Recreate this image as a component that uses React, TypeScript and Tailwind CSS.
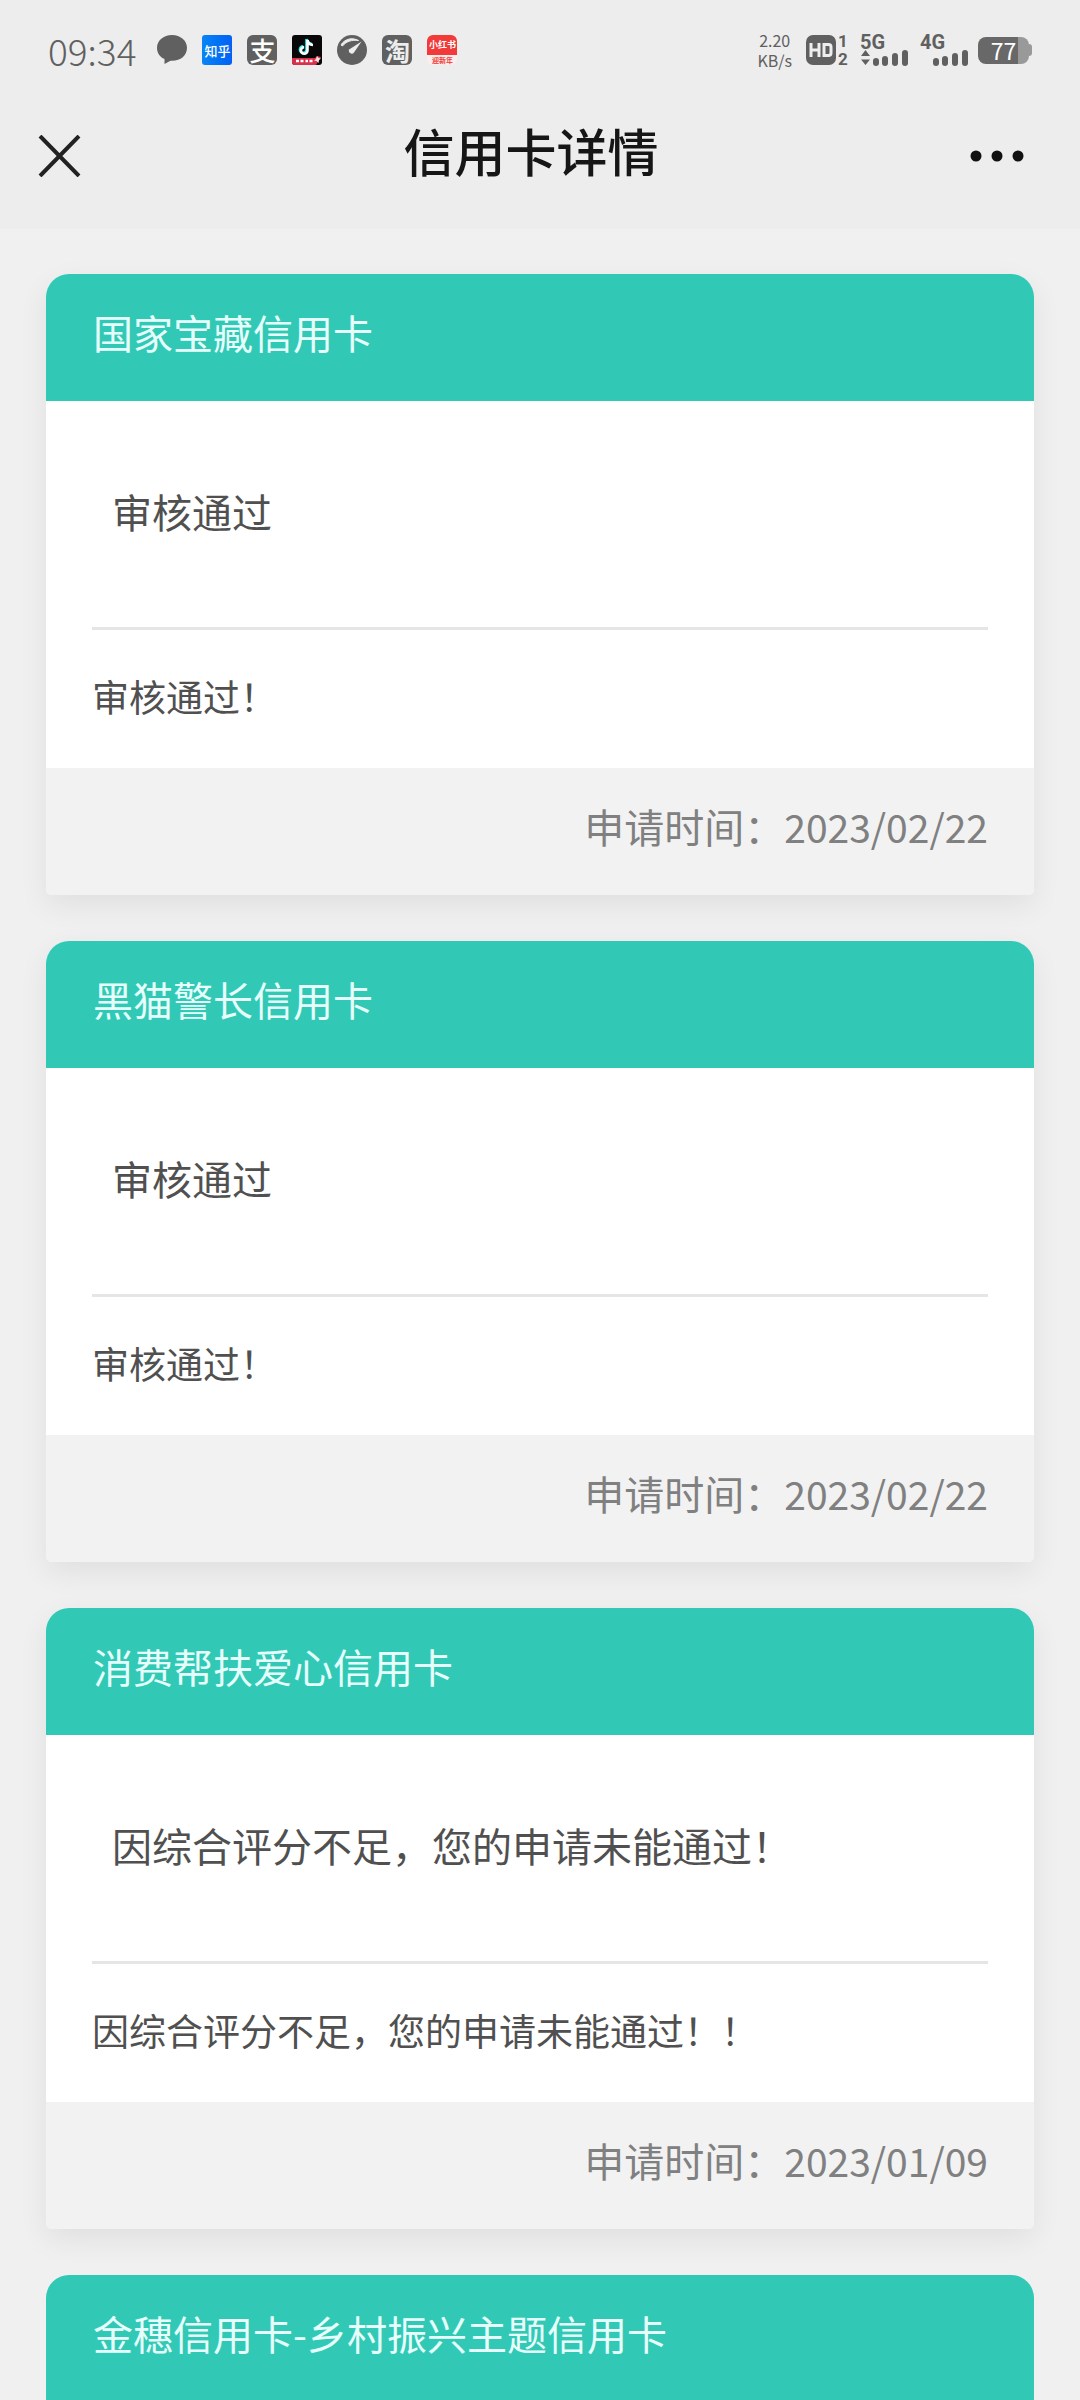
import React from 'react';

interface CardRecord {
    id: number;
    name: string;
    status: string;
    detail: string;
    date: string;
}

const records: CardRecord[] = [
    { id: 1, name: '国家宝藏信用卡', status: '审核通过', detail: '审核通过！', date: '2023/02/22' },
    { id: 2, name: '黑猫警长信用卡', status: '审核通过', detail: '审核通过！', date: '2023/02/22' },
    { id: 3, name: '消费帮扶爱心信用卡', status: '因综合评分不足，您的申请未能通过！', detail: '因综合评分不足，您的申请未能通过！！', date: '2023/01/09' },
];

const lastCardName = '金穗信用卡-乡村振兴主题信用卡';

const SignalBars = () => (
    <>
        <rect x="13" y="23" width="6" height="8" rx="3" />
        <rect x="22" y="21" width="6" height="10" rx="3" />
        <rect x="32" y="18" width="6" height="13" rx="3" />
        <rect x="42" y="15" width="6" height="16" rx="3" />
    </>
);

const StatusBar = () => (
    <div className="flex h-[100px] items-center justify-between px-12 text-[#606060]">
        <div className="flex items-center gap-[15px]">
            <time className="mr-[6px] text-[37px] leading-[40px] font-light">09:34</time>
            <svg className="h-[30px] w-[30px]" viewBox="0 0 30 30" fill="#606060">
                <path d="M15 0C6.500 0 0 5.500 0 12.800c0 5.500 3 9.200 7.500 11.300V29l6-3.200C23 26.500 30 21 30 12.800 30 5.500 23.500 0 15 0z" />
            </svg>
            <span className="flex h-[30px] w-[30px] items-center justify-center rounded-[3px] bg-linear-to-r from-[#0a84f5] to-[#0560f5] text-[13px] leading-none font-medium text-white">知乎</span>
            <span className="flex h-[30px] w-[30px] items-center justify-center rounded-md bg-[#606060] text-[26px] leading-none font-medium text-white">支</span>
            <svg className="h-[30px] w-[30px]" viewBox="0 0 30 30">
                <rect width="30" height="30" rx="3" fill="#0a0709" />
                <path d="M15.500 5v10.500a3.300 3.300 0 1 1-3.300-3.300M15.500 5c.4 3 2.500 4.800 5.500 5" fill="none" stroke="#25f4ee" strokeWidth="2.600" transform="translate(-1 -1)" />
                <path d="M15.500 5v10.500a3.300 3.300 0 1 1-3.300-3.300M15.500 5c.4 3 2.500 4.800 5.500 5" fill="none" stroke="#fff" strokeWidth="2.600" />
                <path d="M0 23h23l2-2 4 1-2 3-3 5H3a3 3 0 0 1-3-3z" fill="#d9304e" />
                <path d="M25 21l1.500 2 2.500.5-2 1.500-.5 3-2-2-2.500-.5 2-1.500z" fill="#fbe3dc" />
                <path d="M4 26h3m1.500 0h3m2 0h2.500m1.500 0h3" stroke="#fff" strokeWidth="2.500" />
            </svg>
            <svg className="h-[30px] w-[30px]" viewBox="0 0 30 30">
                <circle cx="15" cy="15" r="15" fill="#606060" />
                <path d="M4 10C7.500 4 15 2 21.500 5.500 15 4.500 9 6.500 5.500 11z" fill="#ededed" stroke="#ededed" strokeLinejoin="round" />
                <path d="M24.500 6.500l-7.500 11a2.700 2.700 0 0 1-4.500-3.300z" fill="#ededed" />
            </svg>
            <span className="flex h-[30px] w-[30px] items-center justify-center rounded-md bg-[#606060] text-[25px] leading-none font-bold text-[#ededed]">淘</span>
            <span className="flex h-[30px] w-[30px] flex-col overflow-hidden rounded-md bg-[#fbeeec] text-center font-bold">
                <span className="bg-[#f23a3a] text-[9px] leading-[20px] text-white">小红书</span>
                <span className="text-[7px] leading-[10px] text-[#f23a3a]">迎新年</span>
            </span>
        </div>

        <div className="flex items-center">
            <div className="mr-[14px] text-center text-[16px] leading-5">
                2.20
                <br />
                KB/s
            </div>
            <svg className="mr-[10px] h-[42px] w-[44px] font-['Roboto',sans-serif]" viewBox="0 -6 44 42" fill="#606060">
                <rect width="30" height="30" rx="7" />
                <path d="M5 8v14M13 8v14M5 15h8M18 9.500v11h4.500a2.500 2.500 0 0 0 2.500-2.500v-6a2.500 2.500 0 0 0-2.500-2.500z" fill="none" stroke="#ededed" strokeWidth="3" />
                <text x="32" y="12" fontSize="17" fontWeight="bold">1</text>
                <text x="32" y="30" fontSize="17" fontWeight="bold">2</text>
            </svg>
            <svg className="mr-[10px] h-[42px] w-[50px] font-['Roboto',sans-serif]" viewBox="0 -6 50 42" fill="#606060">
                <text x="0" y="14" fontSize="20" fontWeight="bold">5G</text>
                <path d="M5.500 15l4.500 6H1zM5.500 30L1 24.500h9z" />
                <SignalBars />
            </svg>
            <svg className="mr-2 h-[42px] w-[50px] font-['Roboto',sans-serif]" viewBox="0 -6 50 42" fill="#606060">
                <text x="0" y="14" fontSize="20" fontWeight="bold">4G</text>
                <SignalBars />
            </svg>
            <div className="flex items-center">
                <div className="flex h-[27px] w-[51px] items-center justify-center rounded-lg bg-linear-to-r from-[#686868] from-78% to-[#999] to-78% text-[23px] leading-none text-white">77</div>
                <div className="h-3 w-[3px] rounded-r-sm bg-[#999]"></div>
            </div>
        </div>
    </div>
);

const NavBar = () => (
    <div className="grid h-[129px] grid-cols-[1fr_auto_1fr] items-start pr-[56px] pl-[38px]">
        <button type="button" aria-label="关闭" className="mt-[35px] justify-self-start">
            <svg className="h-[42px] w-[43px]" viewBox="0 0 43 42" fill="none" stroke="#222" strokeWidth="4">
                <path d="M2 1l39 40M41 1L2 41" />
            </svg>
        </button>
        <h1 className="mt-[17px] text-[51px] leading-[66px] font-medium text-[#161616]">信用卡详情</h1>
        <button type="button" aria-label="更多" className="mt-[50px] justify-self-end">
            <svg className="h-3 w-[54px]" viewBox="0 0 54 12" fill="#111">
                <circle cx="6" cy="6" r="5.500" />
                <circle cx="27" cy="6" r="5.500" />
                <circle cx="48" cy="6" r="5.500" />
            </svg>
        </button>
    </div>
);

const CardTitle = ({ name }: { name: string }) => (
    <h2 className="h-[127px] rounded-t-[23px] bg-[#31c9b6] px-[47px] pt-[28px] text-[40px] leading-[60px] text-[#e6fffb]">{name}</h2>
);

const RecordCard = ({ record }: { record: CardRecord }) => (
    <article className="rounded-t-[23px] rounded-b-md bg-white shadow-[0_10px_30px_rgba(0,0,0,0.07)]">
        <CardTitle name={record.name} />
        <div className="px-[46px] text-[#505050]">
            <p className="border-b-3 border-[#e5e5e5] px-5 pt-[80px] pb-[86px] text-[40px] leading-[60px]">{record.status}</p>
            <p className="pt-[36px] pb-[42px] text-[37px] leading-[60px]">{record.detail}</p>
        </div>
        <footer className="flex h-[127px] justify-end rounded-b-md bg-[#f2f2f2] px-[46px] pt-[28px] text-[40px] leading-[60px] text-[#808080]">
            <span>申请时间：</span>
            <time className="text-[39px]">{record.date}</time>
        </footer>
    </article>
);

export default function App() {
    return (
        <div className="h-screen overflow-hidden bg-[#f0f0f0] font-['Noto_Sans_CJK_SC',sans-serif]">
            <header className="bg-[#ededed]">
                <StatusBar />
                <NavBar />
            </header>
            <main className="flex flex-col gap-[46px] px-[46px] pt-[45px]">
                {records.map(record => (
                    <RecordCard key={record.id} record={record} />
                ))}
                <article>
                    <CardTitle name={lastCardName} />
                </article>
            </main>
        </div>
    );
}
